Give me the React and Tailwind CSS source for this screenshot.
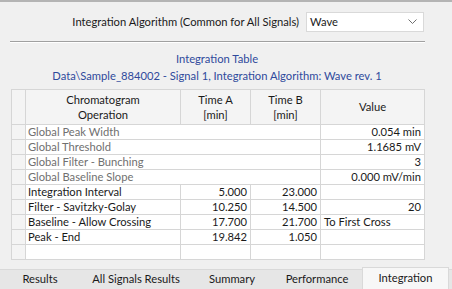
const globalRows = [
  { op: 'Global Peak Width', value: '0.054 min' },
  { op: 'Global Threshold', value: '1.1685 mV' },
  { op: 'Global Filter - Bunching', value: '3' },
  { op: 'Global Baseline Slope', value: '0.000 mV/min' },
];

const opRows = [
  { op: 'Integration Interval', a: '5.000', b: '23.000', value: '', right: false },
  { op: 'Filter - Savitzky-Golay', a: '10.250', b: '14.500', value: '20', right: true },
  { op: 'Baseline - Allow Crossing', a: '17.700', b: '21.700', value: 'To First Cross', right: false },
  { op: 'Peak - End', a: '19.842', b: '1.050', value: '', right: false },
  { op: '', a: '', b: '', value: '', right: false },
];

const tabs = [
  { label: 'Results', w: 'w-[80px]' },
  { label: 'All Signals Results', w: 'w-[112px]' },
  { label: 'Summary', w: 'w-[80px]' },
  { label: 'Performance', w: 'w-[90px]' },
];

const cell = 'border border-[#d6d6d6] h-[15px] p-0 leading-[14px] overflow-hidden whitespace-nowrap';

export default function App() {
  return (
    <div className="relative w-[452px] h-[289px] overflow-hidden bg-[#f0f0f0] text-[11.2px] text-[#1a1a1a] font-['Lato',sans-serif]">
      <div className="h-[2px] bg-[#b4b4b4]" />

      <div className="mt-[10px] flex items-center justify-end gap-[7px] pr-[28px]">
        <span>Integration Algorithm (Common for All Signals)</span>
        <div className="flex h-[20px] w-[118px] items-center justify-between border border-[#d9d9d9] bg-white pl-[3px] pr-[6px]">
          <span>Wave</span>
          <svg width="9" height="6" viewBox="0 0 9 6" fill="none" stroke="#6f6f6f" strokeWidth="1">
            <path d="M0.5 0.5 L4.5 4.5 L8.5 0.5" />
          </svg>
        </div>
      </div>

      <div className="ml-[10px] mr-[27px] mt-[9px] border-t border-[#a0a0a0] border-b border-b-white" />

      <div className="mt-[7px] flex flex-col items-center leading-[17px] text-[#2f4a9c] pr-[18px]">
        <span>Integration Table</span>
        <span>Data\Sample_884002 - Signal 1, Integration Algorithm: Wave rev. 1</span>
      </div>

      <table className="ml-[11px] mt-[5px] w-[413px] table-fixed border-collapse border border-[#a8a8a8]">
        <colgroup>
          <col className="w-[14px]" />
          <col className="w-[155px]" />
          <col className="w-[70px]" />
          <col className="w-[70px]" />
          <col className="w-[104px]" />
        </colgroup>
        <thead>
          <tr className="h-[35px] bg-[#f4f4f4]">
            <th className="border border-[#d6d6d6] p-0" />
            <th className="border border-[#d6d6d6] p-0 font-normal leading-[15px]">Chromatogram<br />Operation</th>
            <th className="border border-[#d6d6d6] p-0 font-normal leading-[15px]">Time A<br />[min]</th>
            <th className="border border-[#d6d6d6] p-0 font-normal leading-[15px]">Time B<br />[min]</th>
            <th className="border border-[#d6d6d6] p-0 font-normal">Value</th>
          </tr>
        </thead>
        <tbody>
          {globalRows.map((row) => (
            <tr key={row.op} className="h-[15px]">
              <td className={`${cell} bg-[#f4f4f4]`} />
              <td colSpan={3} className={`${cell} bg-white pl-[2px] text-[#707070]`}>{row.op}</td>
              <td className={`${cell} bg-white pr-[3px] text-right`}>{row.value}</td>
            </tr>
          ))}
          {opRows.map((row, index) => (
            <tr key={index} className="h-[15px]">
              <td className={`${cell} bg-[#f4f4f4]`} />
              <td className={`${cell} bg-white pl-[2px]`}>{row.op}</td>
              <td className={`${cell} bg-white pr-[3px] text-right`}>{row.a}</td>
              <td className={`${cell} bg-white pr-[3px] text-right`}>{row.b}</td>
              <td className={`${cell} bg-white px-[3px] ${row.right ? 'text-right' : 'text-left'}`}>{row.value}</td>
            </tr>
          ))}
        </tbody>
      </table>

      <div className="absolute bottom-0 left-0 flex h-[20px] w-full items-center border-t border-[#d9d9d9] bg-[#e6e6e6]">
        {tabs.map((tab) => (
          <div key={tab.label} className={`${tab.w} text-center`}>{tab.label}</div>
        ))}
        <div className="-mt-[3px] flex h-[23px] w-[87px] items-center justify-center border-x border-t border-[#d9d9d9] bg-[#f7f7f7]">
          Integration
        </div>
      </div>
    </div>
  );
}
